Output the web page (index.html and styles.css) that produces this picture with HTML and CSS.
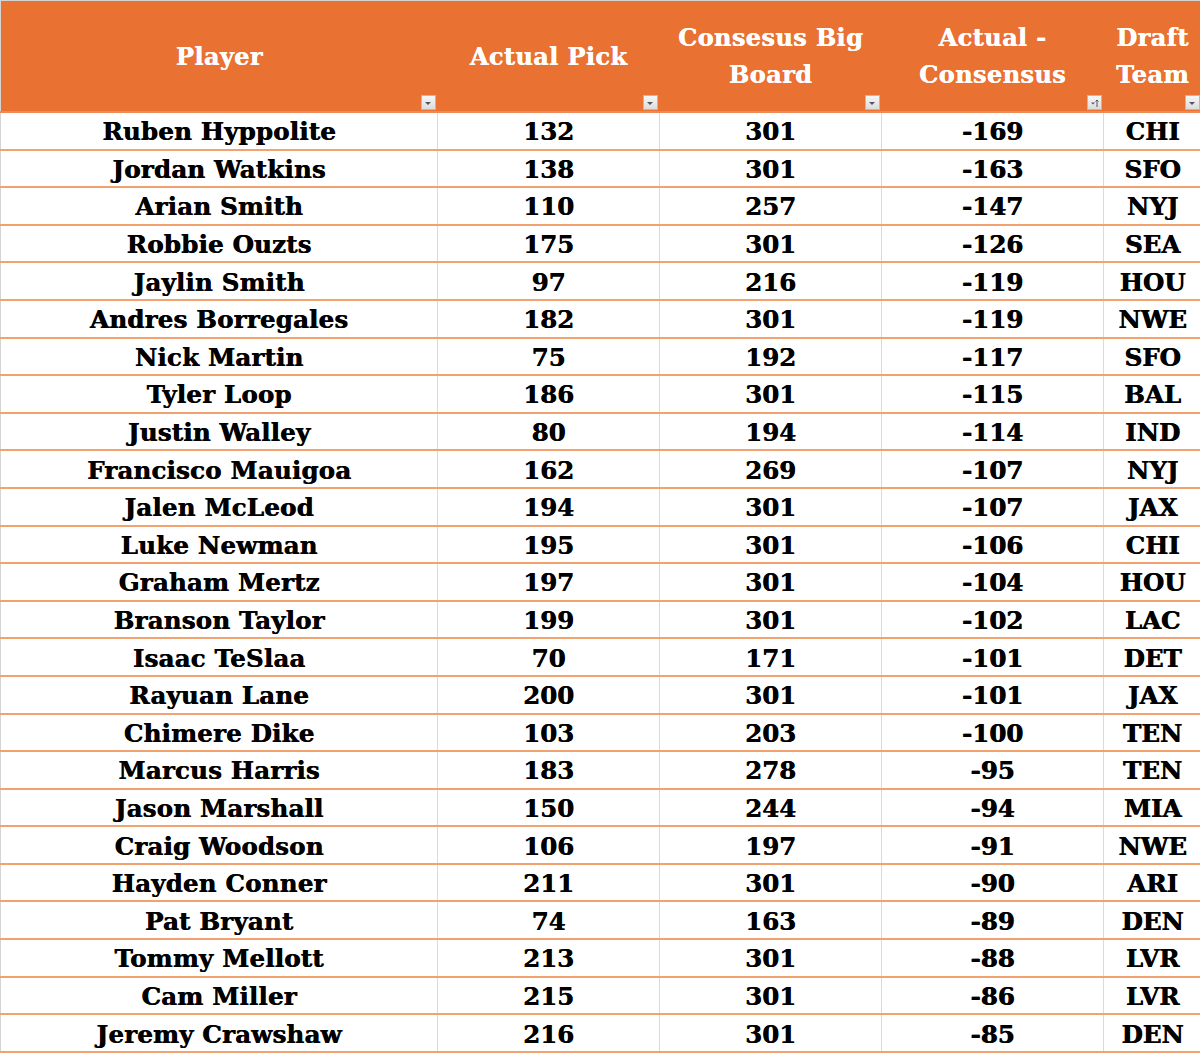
FILE: index.html
```html
<!DOCTYPE html>
<html>
<head>
<meta charset="utf-8">
<link rel="stylesheet" href="styles.css">
</head>
<body>
<table class="sheet">
  <colgroup>
    <col class="c1"><col class="c2"><col class="c3"><col class="c4"><col class="c5">
  </colgroup>
  <thead>
    <tr>
      <th><span class="hd">Player</span><span class="flt"><i class="tri"></i></span></th>
      <th><span class="hd">Actual Pick</span><span class="flt"><i class="tri"></i></span></th>
      <th><span class="hd">Consesus Big<br>Board</span><span class="flt"><i class="tri"></i></span></th>
      <th><span class="hd">Actual -<br>Consensus</span><span class="flt sort"><svg width="12" height="12" viewBox="0 0 12 12"><path d="M3 5.5 L7 5.5 L5 7.5 Z" fill="#555"/><path d="M9 3 L9 10" stroke="#555" stroke-width="1"/><path d="M7.5 4.5 L9 3 L10.5 4.5" stroke="#555" stroke-width="1" fill="none"/></svg></span></th>
      <th><span class="hd">Draft<br>Team</span><span class="flt"><i class="tri"></i></span></th>
    </tr>
  </thead>
  <tbody>
    <tr><td>Ruben Hyppolite</td><td>132</td><td>301</td><td>-169</td><td>CHI</td></tr>
    <tr><td>Jordan Watkins</td><td>138</td><td>301</td><td>-163</td><td>SFO</td></tr>
    <tr><td>Arian Smith</td><td>110</td><td>257</td><td>-147</td><td>NYJ</td></tr>
    <tr><td>Robbie Ouzts</td><td>175</td><td>301</td><td>-126</td><td>SEA</td></tr>
    <tr><td>Jaylin Smith</td><td>97</td><td>216</td><td>-119</td><td>HOU</td></tr>
    <tr><td>Andres Borregales</td><td>182</td><td>301</td><td>-119</td><td>NWE</td></tr>
    <tr><td>Nick Martin</td><td>75</td><td>192</td><td>-117</td><td>SFO</td></tr>
    <tr><td>Tyler Loop</td><td>186</td><td>301</td><td>-115</td><td>BAL</td></tr>
    <tr><td>Justin Walley</td><td>80</td><td>194</td><td>-114</td><td>IND</td></tr>
    <tr><td>Francisco Mauigoa</td><td>162</td><td>269</td><td>-107</td><td>NYJ</td></tr>
    <tr><td>Jalen McLeod</td><td>194</td><td>301</td><td>-107</td><td>JAX</td></tr>
    <tr><td>Luke Newman</td><td>195</td><td>301</td><td>-106</td><td>CHI</td></tr>
    <tr><td>Graham Mertz</td><td>197</td><td>301</td><td>-104</td><td>HOU</td></tr>
    <tr><td>Branson Taylor</td><td>199</td><td>301</td><td>-102</td><td>LAC</td></tr>
    <tr><td>Isaac TeSlaa</td><td>70</td><td>171</td><td>-101</td><td>DET</td></tr>
    <tr><td>Rayuan Lane</td><td>200</td><td>301</td><td>-101</td><td>JAX</td></tr>
    <tr><td>Chimere Dike</td><td>103</td><td>203</td><td>-100</td><td>TEN</td></tr>
    <tr><td>Marcus Harris</td><td>183</td><td>278</td><td>-95</td><td>TEN</td></tr>
    <tr><td>Jason Marshall</td><td>150</td><td>244</td><td>-94</td><td>MIA</td></tr>
    <tr><td>Craig Woodson</td><td>106</td><td>197</td><td>-91</td><td>NWE</td></tr>
    <tr><td>Hayden Conner</td><td>211</td><td>301</td><td>-90</td><td>ARI</td></tr>
    <tr><td>Pat Bryant</td><td>74</td><td>163</td><td>-89</td><td>DEN</td></tr>
    <tr><td>Tommy Mellott</td><td>213</td><td>301</td><td>-88</td><td>LVR</td></tr>
    <tr><td>Cam Miller</td><td>215</td><td>301</td><td>-86</td><td>LVR</td></tr>
    <tr><td>Jeremy Crawshaw</td><td>216</td><td>301</td><td>-85</td><td>DEN</td></tr>
  </tbody>
</table>
</body>
</html>
```

FILE: styles.css
```css
html, body {
  margin: 0;
  padding: 0;
  background: #ffffff;
}
body {
  overflow: hidden;
}
.sheet {
  border-collapse: collapse;
  table-layout: fixed;
  width: 1201px;
  font-family: "DejaVu Serif", "Liberation Serif", serif;
  font-weight: bold;
  border-top: 1px solid #d4d4d4;
  border-left: 1px solid #d4d4d4;
}
.c1 { width: 437px; }
.c2 { width: 222px; }
.c3 { width: 222px; }
.c4 { width: 222px; }
.c5 { width: 98px; }

.sheet thead th {
  height: 110px;
  background: #e97132;
  color: #ffffff;
  font-size: 24px;
  line-height: 37px;
  padding: 0;
  position: relative;
  text-align: center;
  vertical-align: middle;
  border-bottom: 2px solid #ee8a55;
}
.hd {
  display: block;
  letter-spacing: 0.4px;
  text-shadow: 0.5px 0 0 #ffffff;
}
.flt {
  position: absolute;
  right: 2px;
  bottom: 1px;
  width: 13px;
  height: 13px;
  border: 1px solid #b9b9b9;
  background: linear-gradient(#f7f7f7, #dcdcdc);
  display: flex;
  align-items: center;
  justify-content: center;
}
.tri {
  width: 0;
  height: 0;
  border-left: 3.5px solid transparent;
  border-right: 3.5px solid transparent;
  border-top: 3.5px solid #555;
  margin-top: 1px;
}
.sheet tbody td {
  height: 33.6px;
  padding: 2px 0 0 0;
  text-align: center;
  vertical-align: middle;
  font-size: 24.5px;
  color: #000000;
  border-bottom: 2px solid #f2a26f;
  border-right: 1px solid #dadada;
  white-space: nowrap;
  text-shadow: 0.6px 0 0 #000;
}
.sheet tbody td:first-child {
  letter-spacing: 0.2px;
}
```
